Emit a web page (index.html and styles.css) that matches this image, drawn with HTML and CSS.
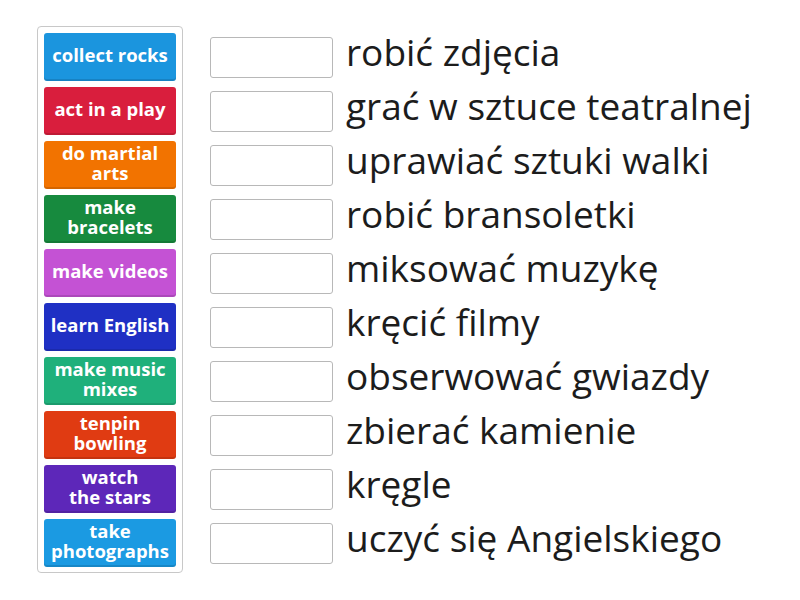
FILE: index.html
```html
<!DOCTYPE html>
<html lang="pl">
<head>
<meta charset="utf-8">
<link rel="stylesheet" href="styles.css">
</head>
<body>
<div class="board">
  <div class="tiles">
    <div class="tile c1">collect rocks</div>
    <div class="tile c2">act in a play</div>
    <div class="tile c3">do martial<br>arts</div>
    <div class="tile c4">make<br>bracelets</div>
    <div class="tile c5">make videos</div>
    <div class="tile c6">learn English</div>
    <div class="tile c7">make music<br>mixes</div>
    <div class="tile c8">tenpin<br>bowling</div>
    <div class="tile c9">watch<br>the stars</div>
    <div class="tile c10">take<br>photographs</div>
  </div>
  <div class="rows">
    <div class="row"><div class="slot"></div><span class="label">robić zdjęcia</span></div>
    <div class="row"><div class="slot"></div><span class="label">grać w sztuce teatralnej</span></div>
    <div class="row"><div class="slot"></div><span class="label">uprawiać sztuki walki</span></div>
    <div class="row"><div class="slot"></div><span class="label">robić bransoletki</span></div>
    <div class="row"><div class="slot"></div><span class="label">miksować muzykę</span></div>
    <div class="row"><div class="slot"></div><span class="label">kręcić filmy</span></div>
    <div class="row"><div class="slot"></div><span class="label">obserwować gwiazdy</span></div>
    <div class="row"><div class="slot"></div><span class="label">zbierać kamienie</span></div>
    <div class="row"><div class="slot"></div><span class="label">kręgle</span></div>
    <div class="row"><div class="slot"></div><span class="label">uczyć się Angielskiego</span></div>
  </div>
</div>
</body>
</html>
```

FILE: styles.css
```css
html, body {
  margin: 0;
  padding: 0;
  background: #ffffff;
}
body {
  font-family: "Open Sans", "Noto Sans", sans-serif;
}
.board {
  display: flex;
  align-items: flex-start;
  padding: 26px 0 0 37px;
}
.tiles {
  display: flex;
  flex-direction: column;
  gap: 6px;
  padding: 6px 6px 5px 6px;
  border: 1px solid #c8c8c8;
  border-radius: 4px;
}
.tile {
  width: 132px;
  height: 48px;
  box-sizing: border-box;
  padding-bottom: 4px;
  border-radius: 3px;
  color: #ffffff;
  font-weight: 700;
  font-size: 18.5px;
  line-height: 20px;
  text-align: center;
  display: flex;
  align-items: center;
  justify-content: center;
  box-shadow: inset 0 -2px 0 rgba(0,0,0,0.12);
}
.c1 { background: #1b95de; }
.c2 { background: #d91e3d; }
.c3 { background: #f27300; }
.c4 { background: #178a3e; }
.c5 { background: #c452d4; }
.c6 { background: #1f30c4; }
.c7 { background: #1fb07b; }
.c8 { background: #e03b12; }
.c9 { background: #5d27b9; }
.c10 { background: #1b9ae2; }
.rows {
  display: flex;
  flex-direction: column;
  gap: 6px;
  padding-top: 7px;
  margin-left: 27px;
}
.row {
  height: 48px;
  display: flex;
  align-items: center;
}
.slot {
  width: 123px;
  height: 41px;
  box-sizing: border-box;
  border: 1px solid #b8b8b8;
  border-radius: 3px;
  background: #ffffff;
  flex: none;
}
.label {
  margin-left: 13px;
  font-size: 37px;
  color: #1c1c1c;
  white-space: nowrap;
  line-height: 44px;
  position: relative;
  top: -5px;
}
```
